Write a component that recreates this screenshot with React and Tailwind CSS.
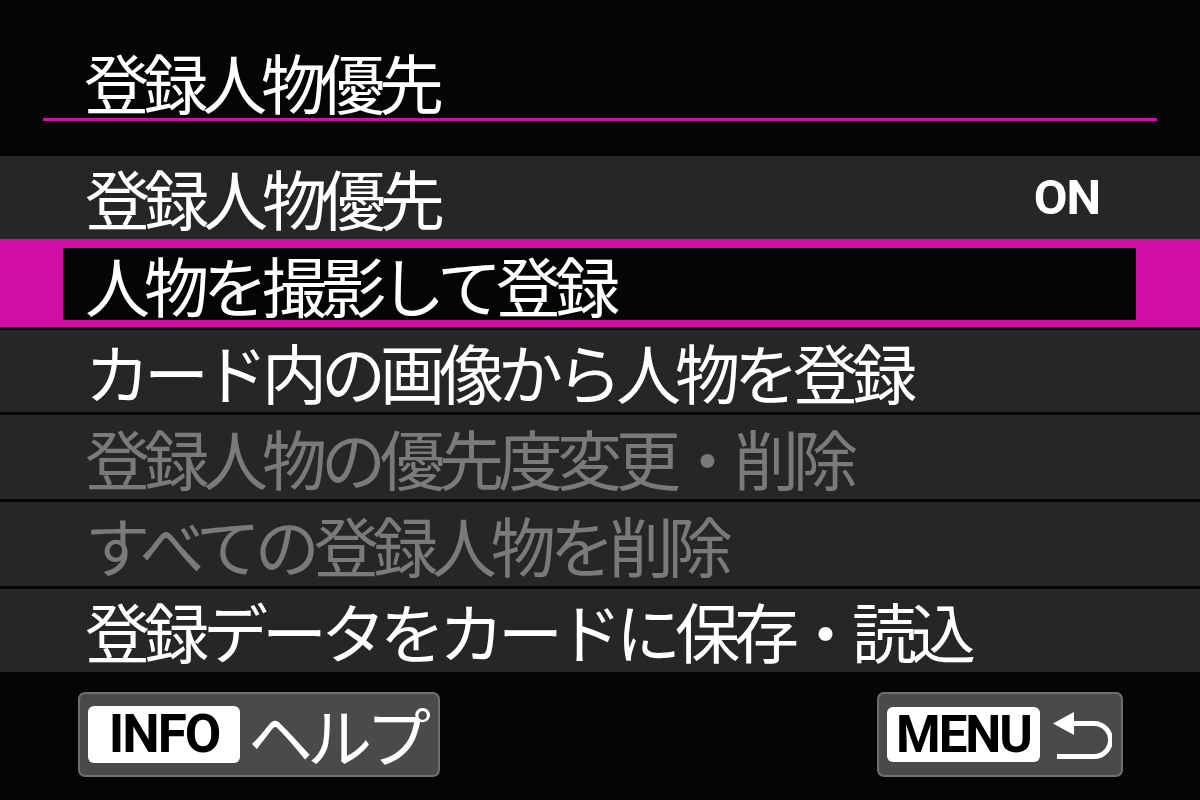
import React from "react";

const JP = { fontFamily: '"Noto Sans CJK JP", "Noto Sans", sans-serif' };
const LAT = { fontFamily: 'Roboto, "Liberation Sans", sans-serif' };

function Row({ children, right, dim, className = "" }) {
  return (
    <div className={`w-full bg-[#262626] flex items-center pl-[85px] pr-[100px] ${className}`}>
      <span
        className={`text-[65px] leading-none tracking-[-6px] whitespace-nowrap ${dim ? "text-[#7a7a7a]" : "text-white"}`}
        style={JP}
      >
        {children}
      </span>
      {right && (
        <span className="ml-auto text-[49px] font-bold leading-none text-white tracking-[-1px]" style={LAT}>
          {right}
        </span>
      )}
    </div>
  );
}

function ReturnIcon() {
  return (
    <svg width="60" height="48" viewBox="0 0 60 48" fill="none">
      <polygon points="1,12.5 22,1 22,24" fill="white" />
      <path d="M20 12.5 H42 A16.5 16.5 0 0 1 42 45.5 H5" stroke="white" strokeWidth="5" fill="none" />
    </svg>
  );
}

export default function App() {
  return (
    <div className="w-[1200px] h-[800px] bg-[#050505] overflow-hidden flex flex-col">
      {/* Title */}
      <div className="pt-[46px] pl-[84px] h-[118px]">
        <span className="text-[65px] leading-[70px] tracking-[-6px] text-white whitespace-nowrap" style={JP}>
          登録人物優先
        </span>
      </div>
      <div className="ml-[43px] w-[1114px] h-[3px] bg-[#cf0fa6]" />
      <div className="h-[35px]" />

      {/* Menu rows */}
      <Row right="ON" className="h-[83px]">登録人物優先</Row>

      <div className="w-full h-[88px] bg-[#cf0fa6] pt-[9px] pb-[7px] pl-[63px] pr-[64px] flex">
        <div className="flex-1 bg-[#050505] flex items-center pl-[22px]">
          <span className="text-[65px] leading-none tracking-[-6px] text-white whitespace-nowrap" style={JP}>
            人物を撮影して登録
          </span>
        </div>
      </div>

      <Row className="h-[82px] mt-[3px]">カード内の画像から人物を登録</Row>
      <Row dim className="h-[84px] mt-[3px]">登録人物の優先度変更・削除</Row>
      <Row dim className="h-[84px] mt-[3px]">すべての登録人物を削除</Row>
      <Row className="h-[83px] mt-[3px]">登録データをカードに保存・読込</Row>

      {/* Footer */}
      <div className="flex justify-between pl-[78px] pr-[77px] mt-[20px]">
        <div className="w-[362px] h-[85px] rounded-[7px] bg-[#4a4a4a] border-2 border-[#6f6f6f] flex items-center pl-[8px]">
          <div className="w-[152px] h-[57px] rounded-[6px] bg-white flex items-center justify-center">
            <span className="text-[53px] font-bold leading-none text-black tracking-[-2px]" style={LAT}>
              INFO
            </span>
          </div>
          <span className="ml-[8px] text-[65px] leading-none tracking-[-6px] text-white" style={JP}>
            ヘルプ
          </span>
        </div>
        <div className="w-[246px] h-[85px] rounded-[7px] bg-[#4a4a4a] border-2 border-[#6f6f6f] flex items-center pl-[8px]">
          <div className="w-[153px] h-[55px] rounded-[6px] bg-white flex items-center justify-center">
            <span className="text-[51px] font-bold leading-none text-black tracking-[-2px]" style={LAT}>
              MENU
            </span>
          </div>
          <div className="ml-[12px]">
            <ReturnIcon />
          </div>
        </div>
      </div>
    </div>
  );
}
